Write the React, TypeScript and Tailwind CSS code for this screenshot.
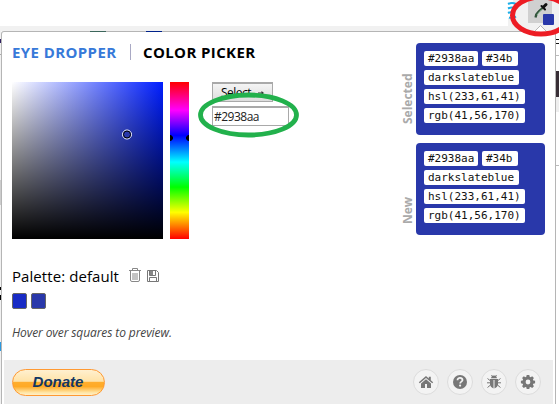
import React from "react";

const mono = "font-['DejaVu_Sans_Mono',monospace]";

function Chip({ children, w }: { children: string; w: string }) {
  return (
    <span className={`block h-[15px] rounded-[2px] bg-white pl-1 text-[11px] leading-[15px] text-[#111] ${mono} ${w}`}>
      {children}
    </span>
  );
}

function ColorBox({ label }: { label: string }) {
  return (
    <div className="flex h-[92px] w-[145px] items-end">
      <div className="flex h-full w-4 items-center pt-[11px] text-[12px] leading-4 font-bold text-[#aaa] [writing-mode:vertical-rl] rotate-180">
        {label}
      </div>
      <div className="flex h-[92px] w-[129px] flex-col gap-1 rounded bg-[#2938aa] px-2 pt-2">
        <div className="flex gap-1">
          <Chip w="w-[54px]">#2938aa</Chip>
          <Chip w="w-[36px]">#34b</Chip>
        </div>
        <Chip w="w-[95px]">darkslateblue</Chip>
        <Chip w="w-[101px]">hsl(233,61,41)</Chip>
        <Chip w="w-[101px]">rgb(41,56,170)</Chip>
      </div>
    </div>
  );
}

function RoundIcon({ children }: { children: React.ReactNode }) {
  return (
    <div className="flex h-[26px] w-[26px] items-center justify-center rounded-full border border-[#dcdcdc] bg-[#f3f3f3] text-[#777]">
      <svg width="16" height="16" viewBox="0 0 16 16" fill="currentColor">
        {children}
      </svg>
    </div>
  );
}

export default function App() {
  return (
    <div className="relative flex h-[404px] w-[559px] flex-col overflow-hidden bg-white font-['Open_Sans','Noto_Sans',sans-serif]">
      <div className="flex h-[31px] shrink-0 flex-col justify-end">
        <div className="h-[5px] bg-[#f1f1f1]" />
      </div>
      <div className="flex h-[373px]">
        {/* page edge visible left of the popup */}
        <div className="flex w-px shrink-0 flex-col bg-[#f1f1f1]">
          <div className="mt-2 h-1 bg-[#302060]" />
          <div className="mt-[11px] h-px bg-[#aaa]" />
          <div className="mt-[125px] h-[25px] bg-[#ccc]" />
          <div className="mt-[82px] h-[3px] bg-black" />
          <div className="mt-[5px] h-[5px] bg-black" />
          <div className="mt-[42px] h-[9px] bg-[#2b99e0]" />
        </div>
        <div className="flex w-[555px] shrink-0 flex-col rounded-t-[3px] border-x border-t border-[#b5b5b5] bg-white">
          <div className="flex h-[328px] justify-between pl-[10px]">
            <div className="flex flex-col">
              <div className="mt-[10px] flex h-5 items-center text-[15px] leading-5 font-bold whitespace-nowrap">
                <span className="w-[118px] tracking-[0.4px] text-[#3779d9]">EYE DROPPER</span>
                <span className="h-4 w-px bg-[#a9a9c4]" />
                <span className="ml-[12px] tracking-[0.38px] text-black">COLOR PICKER</span>
              </div>
              <div className="mt-5 flex h-[157px]">
                <div className="relative w-[151px] bg-[linear-gradient(to_bottom,transparent,#000),linear-gradient(to_right,#fff,#001eff)]">
                  <svg className="absolute top-[47px] left-[109px]" width="12" height="12" viewBox="0 0 12 12">
                    <circle cx="6" cy="5.5" r="4.5" fill="none" stroke="#fff" />
                    <circle cx="6" cy="5.5" r="3.5" fill="#2938aa" stroke="#000" />
                  </svg>
                </div>
                <div className="relative ml-[7px] w-[19px] bg-[linear-gradient(to_bottom,#f00_0%,#f0f_18%,#00f_34%,#0ff_51%,#0f0_67%,#ff0_83%,#f00_100%)]">
                  <svg className="absolute top-[53px] left-0" width="19" height="6" viewBox="0 0 19 6">
                    <path d="M0 0h1l2 2v2l-2 2H0zM19 0h-1l-2 2v2l2 2h1z" fill="#000" />
                  </svg>
                </div>
                <div className="ml-[23px] flex flex-col">
                  <div className="flex h-5 w-[61px] items-start justify-center gap-[7px] border border-t-2 border-[#a9a9a9] bg-gradient-to-b from-[#f4f4f4] to-[#ddd] text-[12px] leading-[18px] tracking-[-0.5px] text-black">
                    <span>Select</span>
                    <svg className="mt-[7px]" width="6" height="4" viewBox="0 0 6 4">
                      <path d="M0 1.500h3.500V0L6 2 3.500 4V2.500H0z" fill="#333" />
                    </svg>
                  </div>
                  <div className="mt-1 h-5 w-[77px] border border-t-2 border-[#a9a9a9] bg-white pl-px text-[12px] leading-[18px] tracking-[-0.5px] text-[#222]">
                    #2938aa
                  </div>
                </div>
              </div>
              <div className="mt-[26px] flex h-[22px] items-center">
                <span className="w-[116px] text-[15px] leading-[22px] tracking-[0.07px] whitespace-nowrap text-black">Palette: default</span>
                <svg className="mb-[3px]" width="14" height="16" viewBox="0 0 14 16" fill="none" stroke="#888">
                  <path d="M1 3.5h12M4.500 3V1.500h5V3M2.500 4v9q0 1.500 1.500 1.500h6q1.500 0 1.500-1.500V4M5 6v7M7 6v7M9 6v7" />
                </svg>
                <svg className="mb-px ml-1" width="14" height="14" viewBox="0 0 14 14" fill="none" stroke="#777">
                  <path d="M1.5 1.5h9l2 2v9h-11zM3.5 12V8.5h7V12M3.5 2v4.5h6V2" />
                  <path d="M4 2h3v4H4z" fill="#888" stroke="none" />
                </svg>
              </div>
              <div className="mt-[6px] flex gap-1">
                <div className="h-4 w-[15px] rounded-[2px] border border-[#666] bg-[#182bc5]" />
                <div className="h-4 w-[15px] rounded-[2px] border border-[#666] bg-[#2938aa]" />
              </div>
              <div className="mt-4 text-[12px] leading-4 tracking-[-0.1px] whitespace-nowrap text-[#444] italic">
                Hover over squares to preview.
              </div>
            </div>
            <div className="flex flex-col gap-2 pt-[11px] pr-[10px]">
              <ColorBox label="Selected" />
              <ColorBox label="New" />
            </div>
          </div>
          <div className="mr-[2px] ml-[2px] flex h-11 items-start justify-between bg-[#ededed] pt-[9px] pr-[12px] pl-2">
            <div className="h-[27px] w-[93px] rounded-full border border-[#ff9933] bg-[linear-gradient(to_bottom,#fff0cf_0%,#ffe3a8_45%,#ffad2d_50%,#ffaa25_66%,#ffe5a5_90%,#fff0c8_100%)] pr-px text-center font-['Liberation_Sans',sans-serif] text-[15px] leading-[24px] font-bold text-[#123764] italic">
              Donate
            </div>
            <div className="-mr-px flex gap-[8px] pr-px">
              <RoundIcon>
                <path d="M8 2 .8 8.2l1 1L8 4l6.2 5.2 1-1-2.400-2V2.800h-2v1.700zM8 5.2 3 9.400V14h4v-4h2v4h4V9.400z" />
              </RoundIcon>
              <RoundIcon>
                <circle cx="8" cy="8" r="7" />
                <path d="M5.5 6.2c.1-3.4 5.2-3 5 0-.1 1.5-2.3 1.4-2.3 3.2" fill="none" stroke="#f3f3f3" strokeWidth="1.8" />
                <circle cx="8.1" cy="11.6" r="1.1" fill="#f3f3f3" />
              </RoundIcon>
              <RoundIcon>
                <path d="M5.1 4.3a2.9 2.9 0 0 1 5.8 0zM4 5h8v6q-1 3-3.5 3.5V6h-1v8.5Q5 14 4 11z" />
                <path d="M5.5 1 6.5 2.5M10.5 1l-1 1.5M4 6.5 1.5 4.5M12 6.5 14.5 4.5M4 8.8H1M12 8.8h3M4.5 11l-3 2.5M11.5 11l3 2.5" fill="none" stroke="currentColor" />
              </RoundIcon>
              <RoundIcon>
                <path fillRule="evenodd" d="M6.7 1h2.6l.4 1.8.9.4 1.6-1 1.7 1.7-1 1.6.4.9 1.8.4v2.5l-1.8.4-.4.9 1 1.6-1.7 1.7-1.6-1-.9.4-.4 1.8H6.7l-.4-1.8-.9-.4-1.6 1-1.7-1.7 1-1.6-.4-.9-1.8-.4V6.8l1.8-.4.4-.9-1-1.6 1.7-1.7 1.6 1 .9-.4zM8 5.6a2.4 2.4 0 1 0 0 4.8 2.4 2.4 0 0 0 0-4.8z" />
              </RoundIcon>
            </div>
          </div>
        </div>
        {/* page edge visible right of the popup */}
        <div className="flex w-[3px] shrink-0 flex-col bg-white">
          <div className="mt-2 h-px bg-[#111]" />
          <div className="mt-[3px] h-px bg-[#111]" />
          <div className="mt-[11px] h-px bg-[#bbb]" />
          <div className="mt-[15px] h-[26px] bg-[#382e36]" />
          <div className="h-[15px] bg-[#eee]" />
          <div className="mt-[53px] h-px bg-[#bbb]" />
        </div>
      </div>

      {/* page fragments above the popup border */}
      <div className="absolute top-[31px] left-[90px] h-px w-4 bg-[#3c665b]" />
      <div className="absolute top-[31px] left-[146px] h-px w-4 bg-[#00228a]" />

      {/* toolbar button and hand-drawn markers */}
      <svg className="absolute inset-0" width="559" height="404" viewBox="0 0 559 404" fill="none">
        <path d="M508 18h51v13h-51z" fill="#f1f1f1" />
        <path d="M513 0h46v31h-46z" fill="#f1f1f1" />
        <path d="M508 4q4-2 8 0M508 8.5q4-2 8 0M508 13q3-1.5 6 0M509 17.5q3 1 7-1" stroke="#1caee8" strokeWidth="2" />
        <path d="M528 0h24v23h-24z" fill="#d0d0d0" />
        <path d="M535.5 17.5q.5-4 3-6l4-3.5" stroke="#31533b" strokeWidth="2.2" />
        <path d="m537 15 4.5-5.5" stroke="#8ec19b" strokeWidth=".8" />
        <path d="m541.5 6 3.5 3.5" stroke="#111" strokeWidth="2" strokeLinecap="round" />
        <path d="m543.5 7 2.5-2.5" stroke="#111" strokeWidth="3" strokeLinecap="round" />
        <rect x="543" y="14" width="11" height="11" rx="1" fill="#2938aa" />
        <path d="m534 32 6.5-6.5L547 32" fill="#fff" stroke="#b5b5b5" />
        <ellipse cx="541" cy="15.5" rx="28.5" ry="18.5" stroke="#ed1c24" strokeWidth="5" />
        <ellipse cx="248.5" cy="115" rx="48" ry="20" stroke="#22b14c" strokeWidth="4.8" />
      </svg>
    </div>
  );
}
